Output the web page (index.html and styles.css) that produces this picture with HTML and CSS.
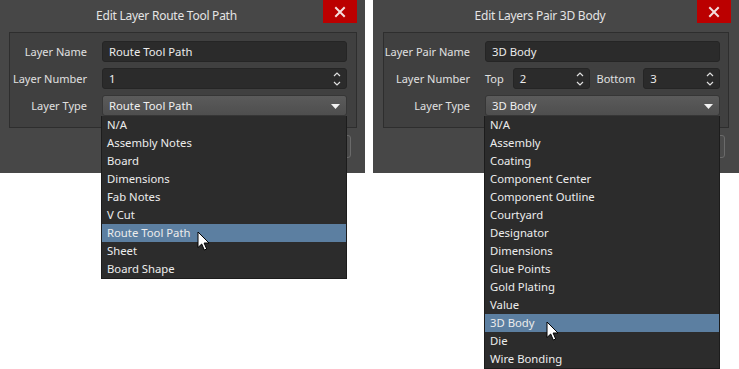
FILE: index.html
```html
<!DOCTYPE html>
<html>
<head>
<meta charset="utf-8">
<link rel="stylesheet" href="styles.css">
</head>
<body>
<div class="stage">
  <div class="dialog">
    <div class="titlebar">
      <div class="title">Edit Layer Route Tool Path</div>
      <div class="close"><svg width="12" height="12" viewBox="0 0 12 12"><path d="M2 2 L10 10 M10 2 L2 10" stroke="#f4dede" stroke-width="2" stroke-linecap="square"/></svg></div>
    </div>
    <div class="panel">
      <div class="grid grid-a">
        <div class="label">Layer Name</div>
        <div class="field">Route Tool Path</div>
        <div class="label">Layer Number</div>
        <div class="field spin">1<svg class="spinarrows" width="8" height="16" viewBox="0 0 8 16"><path d="M1 5 L4 2 L7 5 M1 11 L4 14 L7 11" fill="none" stroke="#e0e0e0" stroke-width="1.2"/></svg></div>
        <div class="label">Layer Type</div>
        <div class="combo">Route Tool Path<svg class="tri" width="9" height="5" viewBox="0 0 9 5"><path d="M0 0 H9 L4.5 5 Z" fill="#f2f2f2"/></svg></div>
      </div>
    </div>
    <div class="buttons"><div class="btn">OK</div><div class="btn">Cancel</div></div>
    <ul class="list list-a">
      <li>N/A</li>
      <li>Assembly Notes</li>
      <li>Board</li>
      <li>Dimensions</li>
      <li>Fab Notes</li>
      <li>V Cut</li>
      <li class="sel">Route Tool Path</li>
      <li>Sheet</li>
      <li>Board Shape</li>
    </ul>
    <svg class="cursor cursor-a" width="14" height="21" viewBox="0 0 14 21"><path d="M1 1 L1 16.5 L4.7 13 L7.3 19 L9.7 18 L7.1 12 L12 12 Z" fill="#fff" stroke="#000" stroke-width="1" stroke-linejoin="miter"/></svg>
  </div>

  <div class="dialog">
    <div class="titlebar">
      <div class="title">Edit Layers Pair 3D Body</div>
      <div class="close"><svg width="12" height="12" viewBox="0 0 12 12"><path d="M2 2 L10 10 M10 2 L2 10" stroke="#f4dede" stroke-width="2" stroke-linecap="square"/></svg></div>
    </div>
    <div class="panel panel-b">
      <div class="grid grid-b">
        <div class="label">Layer Pair Name</div>
        <div class="field">3D Body</div>
        <div class="label">Layer Number</div>
        <div class="pair">
          <span class="sublabel">Top</span>
          <div class="field spin grow">2<svg class="spinarrows" width="8" height="16" viewBox="0 0 8 16"><path d="M1 5 L4 2 L7 5 M1 11 L4 14 L7 11" fill="none" stroke="#e0e0e0" stroke-width="1.2"/></svg></div>
          <span class="sublabel bottom">Bottom</span>
          <div class="field spin grow">3<svg class="spinarrows" width="8" height="16" viewBox="0 0 8 16"><path d="M1 5 L4 2 L7 5 M1 11 L4 14 L7 11" fill="none" stroke="#e0e0e0" stroke-width="1.2"/></svg></div>
        </div>
        <div class="label">Layer Type</div>
        <div class="combo">3D Body<svg class="tri" width="9" height="5" viewBox="0 0 9 5"><path d="M0 0 H9 L4.5 5 Z" fill="#f2f2f2"/></svg></div>
      </div>
    </div>
    <div class="buttons"><div class="btn">OK</div><div class="btn">Cancel</div></div>
    <ul class="list list-b">
      <li>N/A</li>
      <li>Assembly</li>
      <li>Coating</li>
      <li>Component Center</li>
      <li>Component Outline</li>
      <li>Courtyard</li>
      <li>Designator</li>
      <li>Dimensions</li>
      <li>Glue Points</li>
      <li>Gold Plating</li>
      <li>Value</li>
      <li class="sel">3D Body</li>
      <li>Die</li>
      <li>Wire Bonding</li>
    </ul>
    <svg class="cursor cursor-b" width="14" height="21" viewBox="0 0 14 21"><path d="M1 1 L1 16.5 L4.7 13 L7.3 19 L9.7 18 L7.1 12 L12 12 Z" fill="#fff" stroke="#000" stroke-width="1" stroke-linejoin="miter"/></svg>
  </div>
</div>
</body>
</html>
```
FILE: styles.css
```css
* { box-sizing: border-box; }
html, body { margin: 0; padding: 0; background: #fff; }
body {
  font-family: "Noto Sans", "Open Sans", sans-serif;
  font-size: 11px;
  color: #e4e4e4;
  width: 739px;
  height: 369px;
  overflow: hidden;
}
.stage { display: flex; gap: 8px; }
.dialog {
  position: relative;
  width: 365px;
  height: 173px;
  background: #474747;
  display: flex;
  flex-direction: column;
}
.dialog + .dialog { width: 366px; }
.titlebar { height: 32px; display: flex; align-items: flex-start; }
.title {
  flex: 1;
  text-align: center;
  line-height: 32px;
  font-size: 12px;
  letter-spacing: -0.25px;
  color: #e4e4e4;
  padding-left: 10px;
}
.close {
  width: 34px;
  height: 23px;
  margin-right: 8px;
  background: #bb0000;
  display: flex;
  align-items: center;
  justify-content: center;
}
.panel {
  margin: 0 8px 0 9px;
  height: 96px;
  background: #404040;
  border: 1px solid #2e2e2e;
  padding: 8px 9px 0 0;
}
.panel-b { margin-left: 10px; margin-right: 10px; padding-right: 8px; }
.grid {
  display: grid;
  row-gap: 6px;
  column-gap: 15px;
  grid-auto-rows: 21px;
  align-items: center;
}
.grid-a { grid-template-columns: 77px 1fr; }
.grid-b { grid-template-columns: 86px 1fr; }
.label { text-align: right; color: #e0e0e0; white-space: nowrap; }
.field {
  height: 21px;
  background: #2b2b2b;
  border: 1px solid #252525;
  border-radius: 3px;
  padding: 0 6px;
  display: flex;
  align-items: center;
  position: relative;
  color: #ececec;
  font-size: 11.3px;
}
.spinarrows { position: absolute; right: 5px; top: 2px; }
.combo {
  height: 21px;
  background: linear-gradient(#5b5b5b, #4e4e4e);
  border: 1px solid #363636;
  border-radius: 3px;
  padding: 0 6px;
  display: flex;
  align-items: center;
  position: relative;
  color: #f0f0f0;
  font-size: 11.3px;
}
.tri { position: absolute; right: 6px; top: 8px; }
.pair { display: flex; align-items: center; height: 21px; }
.sublabel { margin-right: 9px; color: #e0e0e0; }
.sublabel.bottom { margin-left: 7px; margin-right: 8px; }
.grow { flex: 1; }
.buttons {
  display: flex;
  justify-content: flex-end;
  gap: 6px;
  margin: 7px 14px 0 0;
}
.btn {
  width: 76px;
  height: 23px;
  border: 1px solid #6a6a6a;
  border-radius: 3px;
  background: #4b4b4b;
  display: flex;
  align-items: center;
  justify-content: center;
}
.list {
  position: absolute;
  top: 116px;
  margin: 0;
  padding: 0;
  list-style: none;
  background: #2c2c2c;
  border: 1px solid #1c1c1c;
  border-top: none;
  font-size: 11.3px;
}
.list li {
  height: 18px;
  line-height: 18px;
  padding-left: 5px;
  color: #ececec;
  white-space: nowrap;
}
.list li.sel { background: #5c7fa1; }
.list-a { left: 101px; width: 246px; }
.list-b { left: 111px; width: 236px; }
.cursor { position: absolute; }
.cursor-a { left: 197px; top: 231px; }
.cursor-b { left: 173px; top: 321px; }
```
